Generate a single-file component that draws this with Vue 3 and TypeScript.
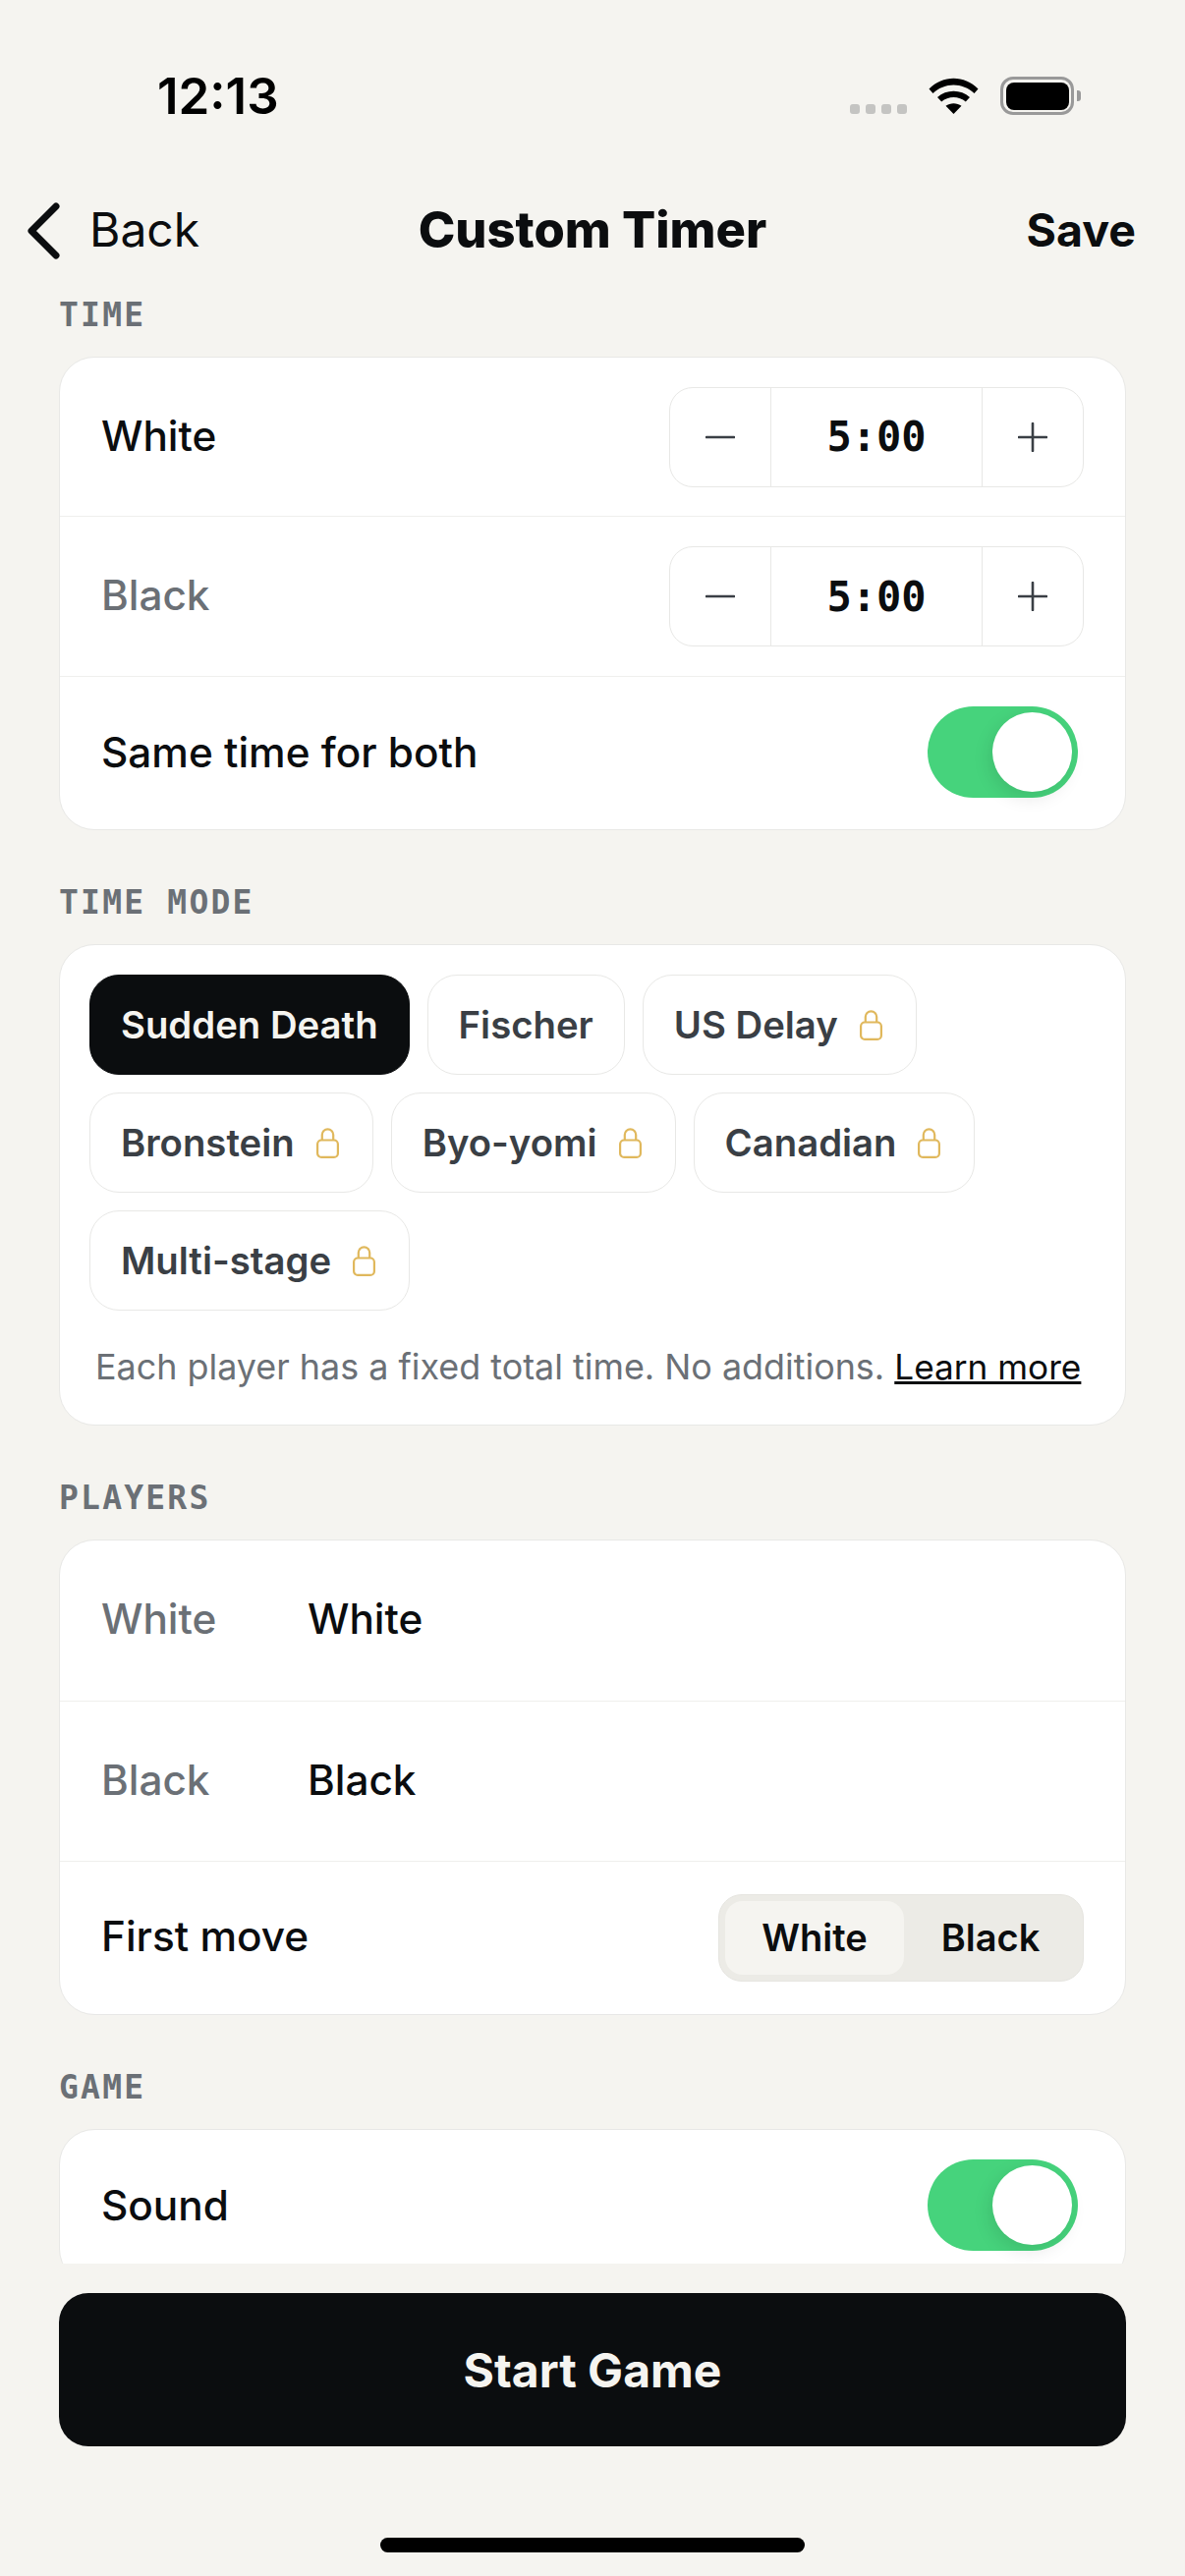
<template>
  <div class="page">
    <div class="status-bar">
      <span class="clock">12:13</span>
      <div class="status-icons">
        <div class="signal"><i v-for="n in 4" :key="n"></i></div>
        <svg class="wifi" width="51" height="37" viewBox="0 0 51 37">
          <path d="M0.5 11.5C14.5 -2.8 36.5 -2.8 50.5 11.5L46.5 16C34.5 4.5 16.5 4.5 4.5 16Z" fill="#000" />
          <path d="M9 20C18 11.5 33 11.5 42 20L37.8 24.6C31 18.6 20 18.6 13.2 24.6Z" fill="#000" />
          <path d="M17.5 28.8C22 25.3 29 25.3 33.5 28.8L25.5 37Z" fill="#000" />
        </svg>
        <div class="battery"><div class="battery-fill"></div></div>
        <div class="battery-nub"></div>
      </div>
    </div>

    <header class="nav">
      <div class="back">
        <svg width="36" height="60" viewBox="0 0 36 60">
          <path d="M32 5L7 30L32 55" fill="none" stroke="#0b0d0f" stroke-width="7" stroke-linecap="round" stroke-linejoin="round" />
        </svg>
        <span class="nav-text">Back</span>
      </div>
      <h1 class="nav-text">Custom Timer</h1>
      <span class="save nav-text">Save</span>
    </header>

    <main class="scroll">
      <section>
        <h2>TIME</h2>
        <div class="card">
          <div v-for="side in sides" :key="side.name" class="row stepper-row">
            <span class="row-text" :class="{ muted: side.muted }">{{ side.name }}</span>
            <div class="stepper">
              <div class="step-btn">
                <svg width="30" height="30" viewBox="0 0 30 30">
                  <path d="M1 15H29" stroke="#3a3f45" stroke-width="2.6" stroke-linecap="round" />
                </svg>
              </div>
              <div class="step-value">5:00</div>
              <div class="step-btn">
                <svg width="30" height="30" viewBox="0 0 30 30">
                  <path d="M1 15H29M15 1V29" stroke="#3a3f45" stroke-width="2.6" stroke-linecap="round" />
                </svg>
              </div>
            </div>
          </div>
          <div class="row toggle-row">
            <span>Same time for both</span>
            <div class="toggle"><div class="knob"></div></div>
          </div>
        </div>
      </section>

      <section>
        <h2>TIME MODE</h2>
        <div class="card modes">
          <div class="chips">
            <div v-for="mode in modes" :key="mode.name" class="chip" :class="{ active: mode.active, locked: mode.locked }">
              <span>{{ mode.name }}</span>
              <svg v-if="mode.locked" width="23" height="31" viewBox="0 0 23 31">
                <path d="M5.8 12.5V7a5.7 5.7 0 0 1 11.4 0v5.5" fill="none" stroke="#e0b85c" stroke-width="2.2" />
                <rect x="1.1" y="12.5" width="20.8" height="17.4" rx="4" fill="none" stroke="#e0b85c" stroke-width="2.2" />
              </svg>
            </div>
          </div>
          <p class="hint">Each player has a fixed total time. No additions. <a>Learn more</a></p>
        </div>
      </section>

      <section>
        <h2>PLAYERS</h2>
        <div class="card">
          <div v-for="side in sides" :key="side.name" class="row player-row">
            <span class="row-text muted player-label">{{ side.name }}</span>
            <span class="row-text">{{ side.name }}</span>
          </div>
          <div class="row first-move">
            <span class="row-text">First move</span>
            <div class="segment">
              <div class="seg-item seg-on">White</div>
              <div class="seg-item">Black</div>
            </div>
          </div>
        </div>
      </section>

      <section>
        <h2>GAME</h2>
        <div class="card">
          <div class="row toggle-row">
            <span>Sound</span>
            <div class="toggle"><div class="knob"></div></div>
          </div>
        </div>
      </section>
    </main>

    <footer class="footer">
      <button class="start">Start Game</button>
      <div class="home-bar"></div>
    </footer>
  </div>
</template>

<script setup lang="ts">
interface Mode {
  name: string
  active?: boolean
  locked?: boolean
}

const sides = [
  { name: 'White', muted: false },
  { name: 'Black', muted: true },
]

const modes: Mode[] = [
  { name: 'Sudden Death', active: true },
  { name: 'Fischer' },
  { name: 'US Delay', locked: true },
  { name: 'Bronstein', locked: true },
  { name: 'Byo-yomi', locked: true },
  { name: 'Canadian', locked: true },
  { name: 'Multi-stage', locked: true },
]
</script>

<style>
html,
body {
  margin: 0;
  background: #f5f4f0;
}
</style>

<style scoped>
.page {
  width: 1206px;
  height: 2622px;
  display: flex;
  flex-direction: column;
  overflow: hidden;
  background: #f5f4f0;
  color: #0b0d0f;
  font-family: Inter, "Noto Sans", sans-serif;
}

.status-bar {
  height: 180px;
  flex-shrink: 0;
  display: flex;
  justify-content: space-between;
  box-sizing: border-box;
  padding: 78px 106px 0 160px;
}
.clock {
  font-size: 51px;
  font-weight: 600;
  line-height: 40px;
  color: #000;
}
.status-icons {
  display: flex;
  align-items: flex-start;
}
.signal {
  display: flex;
  gap: 6px;
  margin: 28px 22px 0 0;
}
.signal i {
  width: 10px;
  height: 10px;
  border-radius: 3px;
  background: #c4c4c2;
}
.wifi {
  margin: 1px 22px 0 0;
}
.battery {
  width: 75px;
  height: 39px;
  box-sizing: border-box;
  border: 3.5px solid #999;
  border-radius: 13px;
  padding: 2.5px;
}
.battery-fill {
  width: 100%;
  height: 100%;
  border-radius: 8px;
  background: #000;
}
.battery-nub {
  width: 4px;
  height: 11px;
  margin: 14px 0 0 3px;
  border-radius: 0 3px 3px 0;
  background: #999;
}

.nav {
  height: 110px;
  flex-shrink: 0;
  display: grid;
  grid-template-columns: 1fr auto 1fr;
  align-items: center;
  padding: 0 50px;
}
.nav-text {
  margin-bottom: 3px;
}
.back {
  display: flex;
  align-items: center;
  gap: 30px;
  margin-left: -25px;
  font-size: 48px;
}
.nav h1 {
  margin-top: 0;
  font-size: 50.7px;
  font-weight: 800;
}
.save {
  justify-self: end;
  font-size: 46.5px;
  font-weight: 700;
}

.scroll {
  flex: 1;
  min-height: 0;
  overflow: hidden;
  box-sizing: border-box;
  padding: 9px 60px 0;
}
section + section {
  margin-top: 52.4px;
}
section + section + section {
  margin-top: 51.6px;
}
h2 {
  margin: 0 0 20px;
  font-family: "DejaVu Sans Mono", monospace;
  font-size: 33px;
  line-height: 44px;
  font-weight: 700;
  letter-spacing: 2.2px;
  color: #6b7076;
}

.card {
  box-sizing: border-box;
  background: #fff;
  border: 1px solid #e8e8e6;
  border-radius: 36px;
  font-size: 42.3px;
  font-weight: 550;
}
.row {
  display: flex;
  align-items: center;
  justify-content: space-between;
  padding: 0 42px;
}
.row + .row {
  border-top: 1px solid #efefed;
}
.row-text {
  margin-bottom: 3px;
}
.muted {
  color: #6b7076;
}
.stepper-row {
  height: 161px;
  box-sizing: border-box;
}
.stepper-row + .stepper-row {
  height: 163px;
}
.toggle-row {
  height: 156px;
  box-sizing: border-box;
  padding-right: 48px;
  padding-bottom: 2px;
}

.stepper {
  width: 422px;
  height: 102px;
  box-sizing: border-box;
  display: flex;
  border: 1px solid #e8e8e6;
  border-radius: 24px;
}
.step-btn {
  width: 102px;
  display: flex;
  align-items: center;
  justify-content: center;
}
.step-value {
  flex: 1;
  display: flex;
  align-items: center;
  justify-content: center;
  border-left: 1px solid #e8e8e6;
  border-right: 1px solid #e8e8e6;
  font-family: "DejaVu Sans Mono", monospace;
  font-size: 42px;
  font-weight: 700;
}

.toggle {
  width: 153px;
  height: 93px;
  box-sizing: border-box;
  padding: 6px 6px 6px 66px;
  border-radius: 47px;
  background: #46d37c;
}
.knob {
  width: 81px;
  height: 81px;
  border-radius: 50%;
  background: #fff;
  box-shadow: -3px 6px 18px rgba(0, 0, 0, 0.1);
}

.modes {
  padding: 30px 30px 29px;
}
.chips {
  display: flex;
  flex-wrap: wrap;
  gap: 18px;
}
.chip {
  height: 102px;
  box-sizing: border-box;
  display: flex;
  align-items: center;
  gap: 22px;
  padding: 0 31px;
  border: 1px solid #e8e8e6;
  border-radius: 30px;
  font-size: 38.3px;
  font-weight: 600;
  color: #3a3f45;
}
.chip.locked {
  padding-right: 34px;
}
.chip.active {
  background: #0b0d0f;
  border-color: #0b0d0f;
  color: #f5f4f0;
}
.hint {
  margin: 27px 0 0;
  padding: 0 6px;
  font-size: 35.9px;
  line-height: 60px;
  font-weight: 400;
  color: #6b7076;
  white-space: nowrap;
}
.hint a {
  font-size: 35.2px;
  color: #0b0d0f;
  text-decoration: underline;
}

.player-row {
  height: 163px;
  box-sizing: border-box;
  justify-content: flex-start;
}
.player-label {
  width: 210px;
}
.first-move {
  height: 156px;
  box-sizing: border-box;
}
.segment {
  width: 372px;
  height: 89px;
  box-sizing: border-box;
  display: flex;
  padding: 6px;
  background: #ecebe6;
  border: 1px solid #e6e5e0;
  border-radius: 24px;
  font-size: 38px;
  font-weight: 600;
}
.seg-item {
  flex: 1;
  display: flex;
  align-items: center;
  justify-content: center;
  border-radius: 18px;
}
.seg-on {
  flex: 0 0 182px;
  background: #f5f4f0;
}

.footer {
  height: 318px;
  flex-shrink: 0;
  display: flex;
  flex-direction: column;
  align-items: center;
  box-sizing: border-box;
  padding: 30px 60px 0;
  background: #f5f4f0;
}
.start {
  width: 100%;
  height: 156px;
  border: 0;
  border-radius: 30px;
  background: #0b0d0f;
  color: #f5f4f0;
  font-family: inherit;
  font-size: 48px;
  font-weight: 700;
}
.home-bar {
  width: 432px;
  height: 15px;
  margin-top: 93px;
  border-radius: 8px;
  background: #000;
}
</style>
